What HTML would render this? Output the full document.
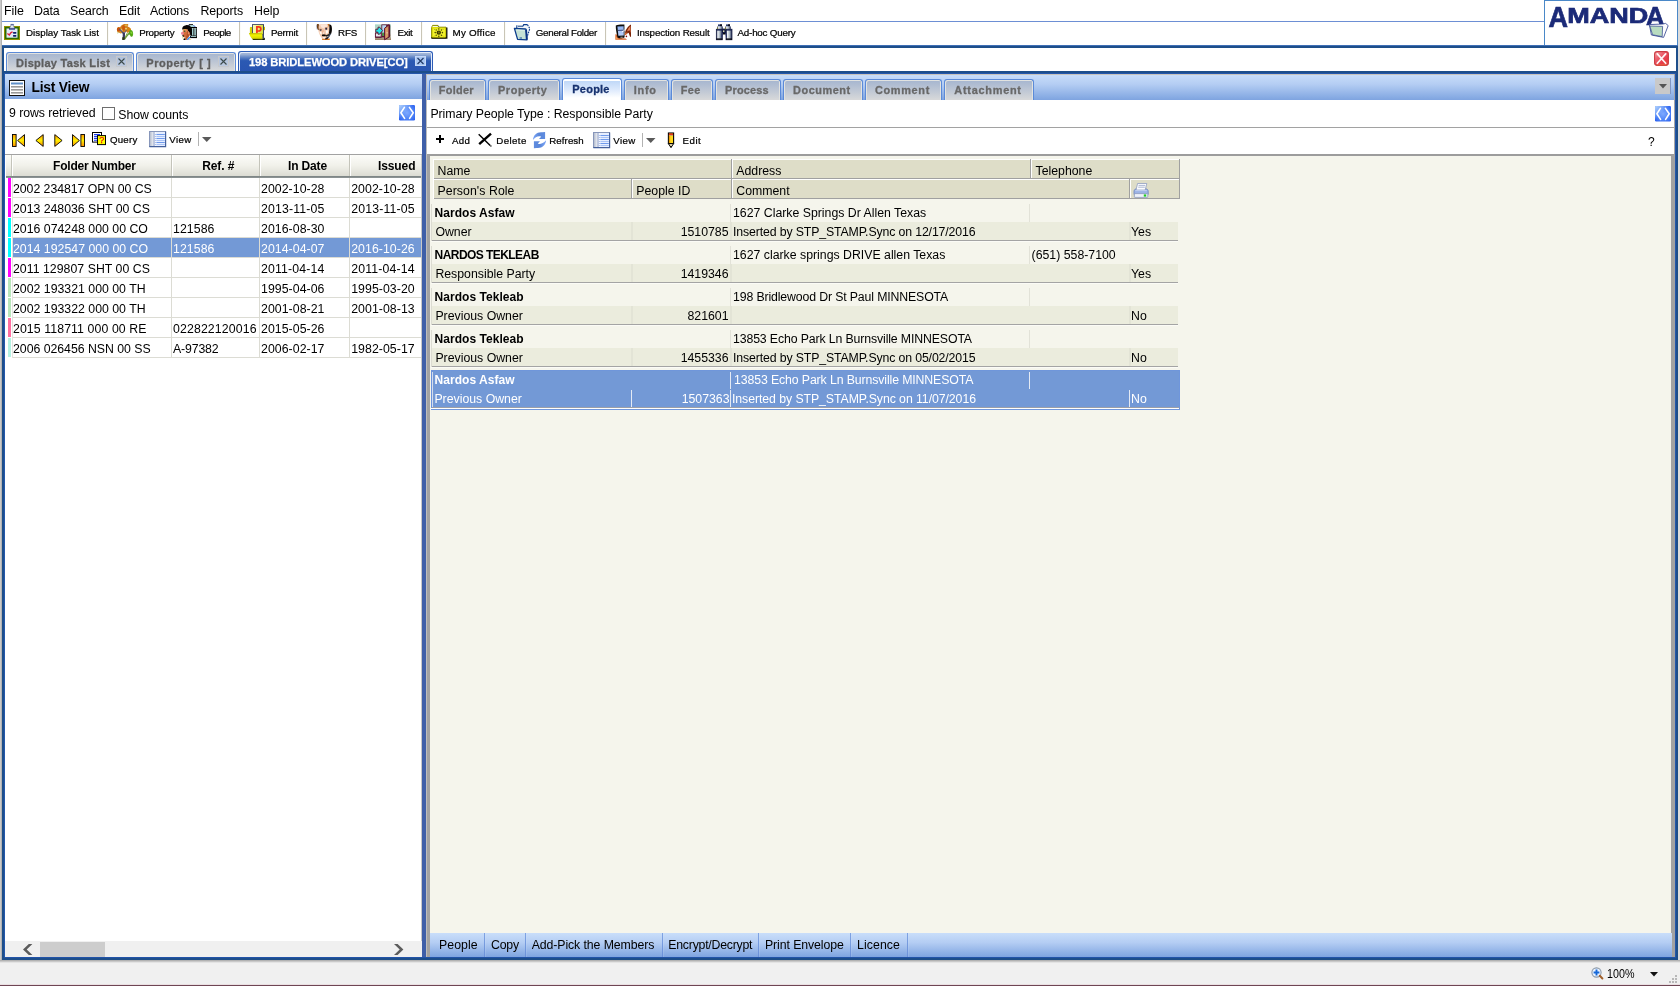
<!DOCTYPE html>
<html lang="en"><head><meta charset="utf-8"><title>AMANDA - 198 BRIDLEWOOD DRIVE[CO]</title>
<style>
html,body{margin:0;padding:0;}
body{width:1680px;height:986px;overflow:hidden;background:#fff;position:relative;font-family:"Liberation Sans",sans-serif;font-size:12px;color:#000;}
div,span.t,svg.i{position:absolute;box-sizing:border-box;}
span.t{white-space:pre;display:block;}
svg.i{display:block;overflow:visible;}

.g{background:linear-gradient(#c9defa 0%,#b4cdf3 40%,#7ea4e0 100%);}
.tab{border:1px solid #5b8ad8;border-bottom:none;border-radius:3px 3px 0 0;background:linear-gradient(#a5b5cf 0%,#bdc6d4 50%,#d8d9da 100%);box-shadow:inset 1px 1px 0 #e2e3e0, inset -1px 0 0 #e2e3e0;}
.tabA{border:1px solid #2d5cb6;border-bottom:none;border-radius:3px 3px 0 0;background:linear-gradient(#a9bcdc 0%,#9db2d6 12%,#5a80c4 30%,#2b59b3 46%,#2955b1 100%);box-shadow:inset 1px 1px 0 #e4ecfa, inset -1px 0 0 #e4ecfa;}
.tabP{border:1px solid #5b8ad8;border-bottom:none;border-radius:3px 3px 0 0;background:linear-gradient(#ffffff 0%,#ffffff 9%,#c0d8f8 10%,#dce9fc 50%,#ffffff 90%);box-shadow:inset 1px 1px 0 #fff, inset -1px 0 0 #fff;}
.cx{border:1px solid #c6c8cc;background:rgba(176,198,232,0.5);}
.hc{background:#deddc8;}

</style></head><body>
<div id="app" style="left:0;top:0;width:1680px;height:986px;will-change:transform;">
<div style="left:0px;top:0px;width:2px;height:962px;background:linear-gradient(to right,#d6d6d6,#a6a6a6);"></div>
<div style="left:1678px;top:0px;width:2px;height:962px;background:#dcdcdc;"></div>
<span class="t" style="left:4px;top:0.70px;font-size:12.4px;line-height:20px;color:#000;letter-spacing:0.005px;">File</span>
<span class="t" style="left:34px;top:0.70px;font-size:12.4px;line-height:20px;color:#000;letter-spacing:-0.173px;">Data</span>
<span class="t" style="left:70px;top:0.70px;font-size:12.4px;line-height:20px;color:#000;letter-spacing:-0.132px;">Search</span>
<span class="t" style="left:119px;top:0.70px;font-size:12.4px;line-height:20px;color:#000;letter-spacing:-0.092px;">Edit</span>
<span class="t" style="left:150px;top:0.70px;font-size:12.4px;line-height:20px;color:#000;letter-spacing:-0.238px;">Actions</span>
<span class="t" style="left:200.5px;top:0.70px;font-size:12.4px;line-height:20px;color:#000;letter-spacing:-0.131px;">Reports</span>
<span class="t" style="left:254px;top:0.70px;font-size:12.4px;line-height:20px;color:#000;letter-spacing:-0.001px;">Help</span>
<div style="left:2px;top:21px;width:1542px;height:1px;background:#6d8fd4;"></div>
<div style="left:1544px;top:0px;width:134px;height:46px;border:1px solid #4a88c8;background:#fff;"></div>
<svg class="i" style="left:1546px;top:2px" width="130" height="42" viewBox="0 0 130 42"><g fill="#1b2a78" stroke="#1b2a78" stroke-width="0.7" font-family="Liberation Sans" font-weight="bold"><text x="2.6" y="24.7" font-size="29.2" textLength="19.5" lengthAdjust="spacingAndGlyphs">A</text><text x="21.2" y="20.7" font-size="22.6" textLength="81" lengthAdjust="spacingAndGlyphs">MAND</text><text x="100" y="23" font-size="26.4" textLength="18.4" lengthAdjust="spacingAndGlyphs">A</text></g><path d="M103.4 22.6 L117 22 L119.6 21.4 L122.2 23.6 L117.6 35.4 L105.4 33z" fill="#fdfdfd" stroke="#2b3f8c" stroke-width="0.8"/><path d="M103.8 24 L116.6 24.4 L116.2 34.6 L106.6 32.8z" fill="#b9dcc0" stroke="#2b3f8c" stroke-width="0.7"/></svg>
<div style="left:107px;top:22px;width:1px;height:23px;background:#c9c5b6;"></div>
<div style="left:108px;top:22px;width:1px;height:23px;background:#fbfbf8;"></div>
<div style="left:239px;top:22px;width:1px;height:23px;background:#c9c5b6;"></div>
<div style="left:240px;top:22px;width:1px;height:23px;background:#fbfbf8;"></div>
<div style="left:306px;top:22px;width:1px;height:23px;background:#c9c5b6;"></div>
<div style="left:307px;top:22px;width:1px;height:23px;background:#fbfbf8;"></div>
<div style="left:365px;top:22px;width:1px;height:23px;background:#c9c5b6;"></div>
<div style="left:366px;top:22px;width:1px;height:23px;background:#fbfbf8;"></div>
<div style="left:421px;top:22px;width:1px;height:23px;background:#c9c5b6;"></div>
<div style="left:422px;top:22px;width:1px;height:23px;background:#fbfbf8;"></div>
<div style="left:504px;top:22px;width:1px;height:23px;background:#c9c5b6;"></div>
<div style="left:505px;top:22px;width:1px;height:23px;background:#fbfbf8;"></div>
<div style="left:605px;top:22px;width:1px;height:23px;background:#c9c5b6;"></div>
<div style="left:606px;top:22px;width:1px;height:23px;background:#fbfbf8;"></div>
<span class="t" style="left:26px;top:22.60px;font-size:9.8px;line-height:20px;color:#000;letter-spacing:0.012px;-webkit-text-stroke:0.22px #000;">Display Task List</span>
<span class="t" style="left:139.2px;top:22.60px;font-size:9.8px;line-height:20px;color:#000;letter-spacing:-0.230px;-webkit-text-stroke:0.22px #000;">Property</span>
<span class="t" style="left:203.3px;top:22.60px;font-size:9.8px;line-height:20px;color:#000;letter-spacing:-0.503px;-webkit-text-stroke:0.22px #000;">People</span>
<span class="t" style="left:271px;top:22.60px;font-size:9.8px;line-height:20px;color:#000;letter-spacing:-0.219px;-webkit-text-stroke:0.22px #000;">Permit</span>
<span class="t" style="left:338px;top:22.60px;font-size:9.8px;line-height:20px;color:#000;letter-spacing:-0.200px;-webkit-text-stroke:0.22px #000;">RFS</span>
<span class="t" style="left:397.5px;top:22.60px;font-size:9.8px;line-height:20px;color:#000;letter-spacing:-0.334px;-webkit-text-stroke:0.22px #000;">Exit</span>
<span class="t" style="left:452.5px;top:22.60px;font-size:9.8px;line-height:20px;color:#000;letter-spacing:0.233px;-webkit-text-stroke:0.22px #000;">My Office</span>
<span class="t" style="left:535.8px;top:22.60px;font-size:9.8px;line-height:20px;color:#000;letter-spacing:-0.298px;-webkit-text-stroke:0.22px #000;">General Folder</span>
<span class="t" style="left:637px;top:22.60px;font-size:9.8px;line-height:20px;color:#000;letter-spacing:-0.157px;-webkit-text-stroke:0.22px #000;">Inspection Result</span>
<span class="t" style="left:737.5px;top:22.60px;font-size:9.8px;line-height:20px;color:#000;letter-spacing:-0.205px;-webkit-text-stroke:0.22px #000;">Ad-hoc Query</span>
<svg class="i" style="left:4px;top:24px;" width="16" height="16" viewBox="0 0 16 16"><rect x="0" y="2" width="16" height="14" fill="#8e8e00"/><rect x="1" y="3" width="14" height="12" fill="#2c6a00"/><rect x="2.5" y="4.5" width="11" height="9.2" fill="#dfeaf9"/><rect x="5" y="4" width="6" height="1.6" fill="#14247a"/><path d="M6.6 0.3h3l0 2 1 1.9h-5l1-1.9z" fill="#e8ecf2" stroke="#60709a" stroke-width="0.5"/><rect x="7" y="0.3" width="2.6" height="1" fill="#3a4a8a"/><path d="M3.4 9.4 L5.3 11 L7 8.6 L8.6 7.8" fill="none" stroke="#e3203c" stroke-width="1.3"/><rect x="9" y="8" width="3.4" height="1.7" rx="0.6" fill="#10206e"/><rect x="9" y="11" width="3.4" height="1.7" rx="0.6" fill="#10206e"/></svg>
<svg class="i" style="left:117px;top:24px;" width="16" height="16" viewBox="0 0 16 16"><path d="M12.8 8.6 C11 10.6 9.2 12.6 7.4 15.2" stroke="#6c9c3a" stroke-width="1.5" fill="none"/><path d="M10.6 8.4 C9.6 10.4 8.6 12.4 7.2 14.4" stroke="#88b050" stroke-width="1" fill="none"/><path d="M0 5 C0 3 2 2.8 3 3.4 C4 1.4 6 0.4 7 0 L11 0 C11.6 1 11.2 2 10.5 2.6 C12.4 3 14 4.2 14 6 C14 7.6 13 8.6 12 8.2 C11 9 9.5 8.2 9 7.2 C8 8.2 7 8.6 6 8 C5 9.6 3 9.6 2.6 8.4 C1 9 0 8 0 6.5z" fill="#d27c1a"/><ellipse cx="1.6" cy="5.4" rx="1.7" ry="1.9" fill="#c6500e"/><ellipse cx="6.6" cy="3.8" rx="1.5" ry="2.7" fill="#cc5a0c"/><ellipse cx="12" cy="5.4" rx="1.9" ry="1.5" fill="#d4860e"/><ellipse cx="4.4" cy="6" rx="1" ry="1.5" fill="#e2c66a" transform="rotate(-30 4.4 6)"/><ellipse cx="9.2" cy="1.3" rx="1.7" ry="0.9" fill="#dcb44e"/><ellipse cx="9" cy="4.6" rx="1.1" ry="0.9" fill="#e4cc78"/><ellipse cx="3.4" cy="8.4" rx="1.2" ry="0.8" fill="#d89a2a"/><path d="M2.4 5 C4 6.4 5.4 8 6.6 10" stroke="#5a5478" stroke-width="1.05" fill="none"/><path d="M9.6 6 C8.6 7.4 7.8 8.6 7.2 10" stroke="#6a5a6a" stroke-width="1" fill="none"/><path d="M5.4 8 C6 10.6 5.8 13.4 5.2 15.8 L7.4 16 C8 13.4 8.2 10.8 7.8 8.4z" fill="#3a3a60"/><path d="M5.5 13 L5.2 15.8 L7.4 16 L7.8 13.4z" fill="#2e3c14"/><path d="M12.4 7 C13.4 5.4 15.4 6 15.8 8 C16.4 9.6 16.2 11.4 15.4 12.6 C14.4 13 13.4 12.4 13.2 11.4 C12 11.2 11.6 8.6 12.4 7z" fill="#52a814"/><path d="M13.8 7.4 C15 7.4 15.6 9 15.4 10.6 C14.6 9.8 13.8 9.2 13.2 9z" fill="#86d234"/><path d="M0.4 8.6 l1 0.2 l-0.6 1z" fill="#7ab82a"/></svg>
<svg class="i" style="left:181px;top:24px;" width="16" height="16" viewBox="0 0 16 16"><rect x="7.8" y="0.2" width="4.2" height="1.1" fill="#000"/><path d="M6.6 3.2 L8.2 1.2 L12.6 1.2 L14.8 3.2z" fill="#aad8d8"/><path d="M8.2 1.2 l-1.4 1.4 M12.6 1.2 l1.6 1.6" stroke="#2038c8" stroke-width="0.9"/><rect x="7" y="3" width="9" height="1.3" fill="#000"/><rect x="10.4" y="4.3" width="5" height="7.4" fill="#b4dcdc"/><path d="M10.5 4.3v7.4M12.9 4.3v7.4M15.3 4.3v7.4" stroke="#000" stroke-width="1"/><path d="M11.7 4.6v7M14.1 4.6v7" stroke="#8cbcbc" stroke-width="0.5"/><rect x="9" y="11.5" width="7" height="2.6" fill="#000"/><rect x="10" y="12.1" width="5.2" height="0.9" fill="#a8d0d0"/><path d="M1.2 5.6 C0.8 3.2 2.6 1.4 5 1.2 C7.6 0.8 10 2 10.6 4.4 C11.2 6.8 10.8 9.6 9.6 11.6 L8 9 L6.4 5.4 L3 5.6z" fill="#0a0605"/><path d="M1.8 5.4 L6.2 5 C7 6.8 7.4 8.2 9 8.8 C9.2 10.8 8.2 12.8 6.6 14 L5.6 16 L4 16 L4.4 13.8 C3.2 13.6 2 12.6 1.8 11.2 L1.4 9.6 L1.8 8z" fill="#d26c3a"/><path d="M6 6.2 C6.6 8 7.4 9 8.8 9.2 C8.8 11 8 12.6 6.6 13.8 L5.6 15.8 L5 13 C6 11 6.2 8.6 6 6.2z" fill="#b4522a"/><path d="M2 6 l1.8 -0.6 l2 0.4 l-0.4 2.2 l-2.6 0.2z" fill="#ee9860"/><ellipse cx="3.7" cy="7.2" rx="0.8" ry="0.9" fill="#4a5a3a"/><path d="M2.4 5.8 l2.6-0.3" stroke="#e0c040" stroke-width="0.6"/><ellipse cx="1.4" cy="9.3" rx="1.4" ry="1.5" fill="#ee8498"/><path d="M1.4 10.8 l1.8 0.6 l-0.4 1.6 l-1.4-0.8z" fill="#3a2a1a"/><path d="M7.2 7.6 c1-0.4 1.5 1 1.1 2.4 c-0.6 0.6-1.3 0.2-1.5-0.6z" fill="#e8946a"/><path d="M2.8 14.6 L4.4 14.2 L4.2 16 L2.4 16z" fill="#000"/><path d="M5.6 16 L7.2 13.4 L9.8 12.6 L8.4 14.8 L7.4 16z" fill="#3c8cf0"/><path d="M7.4 16 l1.4-1.6 l1.6 1.6z" fill="#f4d48c"/><path d="M1.6 12.6 l0.9 1.7 l-1 0.3z" fill="#d8d030"/></svg>
<svg class="i" style="left:249px;top:24px;" width="16" height="16" viewBox="0 0 16 16"><defs><linearGradient id="pp" x1="0" y1="0" x2="1" y2="0"><stop offset="0" stop-color="#fafab8"/><stop offset="0.5" stop-color="#f0f07a"/><stop offset="1" stop-color="#d4dc3c"/></linearGradient><linearGradient id="pf" x1="0" y1="0" x2="0" y2="1"><stop offset="0" stop-color="#b8b800"/><stop offset="0.3" stop-color="#f2f200"/><stop offset="0.65" stop-color="#e0e000"/><stop offset="1" stop-color="#8c8c00"/></linearGradient></defs><rect x="15" y="2.8" width="1" height="3.4" fill="#c0c000"/><rect x="0.9" y="2.9" width="2.4" height="7" rx="0.8" fill="#c6c600"/><rect x="1.5" y="3.6" width="1" height="5.4" fill="#e2e200"/><path d="M3.1 0.1 H15 V15.9 H13.4 L13.4 10 H3.1z" fill="#3a4260"/><rect x="3.1" y="0.1" width="11.9" height="1" fill="#5a6070"/><rect x="4" y="1" width="10" height="9" fill="url(#pp)"/><path d="M7.9 9.4 L7.9 2.8 L9.6 2.8 C12.6 2.8 12.6 7 9.6 7 L8 7" fill="none" stroke="#f8301c" stroke-width="1.7"/><path d="M0 9.4 C0 9 0.4 8.9 0.8 9 L13.6 9.2 L14 14.6 L12.6 15.9 L4.2 15.9 C2.4 14 0.8 12 0 9.4z" fill="url(#pf)"/><path d="M3.4 15.2 L4.2 16 L15.8 16 L15.8 13.4 L14 15 L12.6 15.4z" fill="#0c1400"/><path d="M13.4 10 L14.6 10 L14.8 14.4 L13.6 15.2z" fill="#44506c"/></svg>
<svg class="i" style="left:316px;top:24px;" width="16" height="16" viewBox="0 0 16 16"><path d="M2.2 0.6 C5 -0.3 11 -0.3 13.4 0.6 C14 4 13.8 8 12.6 11 C11.4 13.6 9.8 15.2 8 15.2 C6.4 15.2 5 13.4 3.8 11 C2.4 8 1.4 4 2.2 0.6z" fill="#f4cbb0"/><path d="M4.4 0.8 C6.4 0.2 10 0.2 11.6 0.8 C11.4 3 9.6 4.4 8 4.4 C6.4 4.4 4.4 3 4.4 0.8z" fill="#fce6da"/><path d="M3.4 7.8 l2 0.2 l0.4 2.2 l-1.4-0.2z M9.8 6.6 l2.4-0.4 l-0.4 3 l-1.8 0.6z M6.8 13 l2.2 0 l-0.8 1.6z" fill="#fffdf8"/><path d="M0.9 0.3 C1.8 -0.2 3 0 3 0.8 C2.4 2.4 2.6 4.4 3 6 L1.6 5.6 C0.8 4 0.5 1.8 0.9 0.3z" fill="#6c3c12"/><path d="M0.8 0.8 C0.3 2.4 0.5 4.4 1.2 5.6" stroke="#9aa8d0" stroke-width="0.6" fill="none"/><path d="M11.4 0.2 C12.4 -0.2 13.4 0 13.6 0.8 L13 3.2 C12.6 2 12 1 11.4 0.2z" fill="#c26a1c"/><path d="M13.2 0.6 C14.4 0.2 15.4 1 15.7 2.6 C16.2 5 16 8 15.2 9.6 L12.8 9.8 C13.4 7 13.6 3.4 13.2 0.6z" fill="#0a0706"/><path d="M14.8 9 C13.6 10.6 11.6 11.6 9.8 12" stroke="#20201e" stroke-width="1.3" fill="none"/><path d="M14.4 9.8 C13.8 11.6 12.4 13.2 11 14.2" stroke="#3a4a66" stroke-width="1.1" fill="none"/><ellipse cx="4.6" cy="6.1" rx="1.1" ry="0.75" fill="#15183a"/><ellipse cx="10.2" cy="4.8" rx="1.1" ry="0.85" fill="#15183a"/><path d="M3.2 5.2 l2.6 0.2 M8.8 3.8 l2.6-0.4" stroke="#9a5a3a" stroke-width="0.6"/><path d="M7 5.6 L6.8 9.4" stroke="#e6a684" stroke-width="0.9" fill="none"/><rect x="6.9" y="8.6" width="1.1" height="1.3" fill="#fff"/><path d="M6.4 10.2 h2.4" stroke="#b87858" stroke-width="0.6"/><rect x="5.9" y="10.6" width="4" height="1.6" rx="0.7" fill="#0a0a0a"/><path d="M6 14.4 L8 15.3 L10 14.4 L13.6 14.6 L13.8 16 L6.2 16z" fill="#d4721c"/><path d="M9 14.8 L10.8 13.2 L12.6 13.4 L11.4 15 L9.4 15.6z" fill="#16161e"/></svg>
<svg class="i" style="left:375px;top:24px;" width="16" height="16" viewBox="0 0 16 16"><defs><linearGradient id="exg" x1="0" y1="0" x2="0" y2="1"><stop offset="0" stop-color="#a9d2c2"/><stop offset="0.55" stop-color="#c9ddd0"/><stop offset="0.8" stop-color="#b8b4a0"/><stop offset="1" stop-color="#9a7a5c"/></linearGradient></defs><rect x="0" y="0.4" width="16" height="15.6" fill="url(#exg)"/><rect x="6.4" y="0.4" width="8.4" height="13" fill="#5c1030"/><rect x="7.2" y="1.2" width="4" height="8" fill="#b8d8f4"/><rect x="7.2" y="8.6" width="2.4" height="3.4" fill="#4a9a4a"/><path d="M9.6 4.2 L14 0.8 L14 13 L9.6 15.8z" fill="#c98656" stroke="#5c1030" stroke-width="1"/><path d="M10.6 5 L12.8 3.2 L12.8 12.6 L10.6 14z" fill="#d89a6a"/><rect x="11.6" y="8.4" width="0.9" height="0.9" fill="#fff"/><path d="M14 1 L15.2 1.4 L15.2 12 L14 13z" fill="#5c1030"/><rect x="0.4" y="9" width="5.8" height="4.2" fill="#e6e6ea" stroke="#5c1030" stroke-width="0.9"/><path d="M0.4 13.2 h6" stroke="#5c1030" stroke-width="1"/><path d="M0.8 5.2 L3 5.2 L3 3.2 L4.6 3.2 L7.6 6.6 L4.6 10.2 L3 10.2 L3 8.2 L0.8 8.2z" fill="#1ee6ea" stroke="#5c1030" stroke-width="0.9"/></svg>
<svg class="i" style="left:431px;top:24px;" width="16" height="16" viewBox="0 0 16 16"><path d="M0.6 3.6 L1.6 1.4 L7 1.4 L8 3.2 L15 3.2 L15 14 L0.6 14z" fill="#e9e90c" stroke="#8a8a00" stroke-width="1"/><path d="M1.8 2 L6.8 2 L7.4 3 L1.4 3z" fill="#f8f8e0"/><path d="M7 2 l1 1.4" stroke="#4a5a9a" stroke-width="0.8"/><path d="M0.4 14 H15.8 V3.4" fill="none" stroke="#111100" stroke-width="1.3"/><rect x="1.4" y="4" width="13" height="9.2" fill="#f2f22a"/><path d="M1.4 4 h13 v9.2 h-13z" fill="none" stroke="#caca00" stroke-width="0.6"/><circle cx="7.8" cy="8.6" r="2.2" fill="#3c3a00"/><circle cx="7.8" cy="8.6" r="1" fill="#7a7600"/><g fill="#4a4800"><circle cx="7.8" cy="5" r="0.8"/><circle cx="7.8" cy="12.2" r="0.8"/><circle cx="4.2" cy="8.6" r="0.8"/><circle cx="11.4" cy="8.6" r="0.8"/><circle cx="5.2" cy="6" r="0.7"/><circle cx="10.4" cy="6" r="0.7"/><circle cx="5.2" cy="11.2" r="0.7"/><circle cx="10.4" cy="11.2" r="0.7"/></g><path d="M3 5 l1 1 M12.6 5 l-1 1 M3 12.4 l1-1 M12.6 12.4 l-1-1" stroke="#b0ae00" stroke-width="0.8"/></svg>
<svg class="i" style="left:514px;top:24px;" width="16" height="16" viewBox="0 0 16 16"><path d="M2.6 4.6 L2.9 1.6 L9 1.8 L9.7 0.5 L13.6 0.5 L15.9 4.6 L13 13.4 L12 6z" fill="#f2f7fb"/><path d="M2.7 4.6 L2.9 1.2" stroke="#0c3c8c" stroke-width="1.1"/><path d="M4 2.3 H9" stroke="#5878a8" stroke-width="1.5"/><path d="M9 2.2 L9.7 0.6 L13.4 0.6" stroke="#0c3c8c" stroke-width="1.1" fill="none"/><path d="M13.4 0.6 L15.8 4.6 L13.2 12.8" stroke="#0c3c8c" stroke-width="1.1" fill="none" stroke-dasharray="1.7 0.9"/><path d="M0.4 4.4 L11.4 5 C12.2 5.2 12.4 5.6 12.4 6.4 L13 15.8 L3.6 15.4z" fill="#c6e2d6" stroke="#0c3c8c" stroke-width="1.3" stroke-linejoin="round"/><path d="M12 6 L12.8 15.6" stroke="#0c3484" stroke-width="1.8"/><path d="M5.6 14 h2.4" stroke="#3a6aa8" stroke-width="1.2"/><path d="M2.2 6 L10.6 6.4" stroke="#e4f4ec" stroke-width="0.8"/></svg>
<svg class="i" style="left:615px;top:24px;" width="16" height="16" viewBox="0 0 16 16"><path d="M0.4 10.4 C1.6 10 2.4 11 3 12.4 L5 14 L10.6 14.6 L12 15.8 L0.4 15.8z" fill="#d4662c"/><path d="M0.6 12 C1.6 13 2.6 14.6 4.6 15.6 L0.6 15.6z" fill="#f09a5c"/><path d="M0.8 1.6 C3.4 0.4 7 0.4 9.4 0.6 L9.6 13.2 C7.6 14.6 3.6 14.4 2.4 13.2 C1.6 9 0.6 5 0.8 1.6z" fill="#0e0e0e"/><defs><linearGradient id="scr" x1="0" y1="0" x2="0" y2="1"><stop offset="0" stop-color="#88aef0"/><stop offset="0.5" stop-color="#a8c4f6"/><stop offset="1" stop-color="#b8d0fa"/></linearGradient></defs><path d="M2.4 2.4 L8.6 2.2 L8.8 11.6 L3.4 11.8z" fill="url(#scr)"/><path d="M3 6.4 L8 6.2" stroke="#28386a" stroke-width="0.9"/><rect x="5.4" y="12.6" width="2.4" height="1.4" fill="#8a7a72"/><path d="M16 0.6 C14 1.6 11.6 4.4 10.4 7 L9.8 10.4 L11.4 10 L13.6 8.8 L15 12.6 L16 13z" fill="#7a2408"/><path d="M15.4 2 C14 3.4 12.6 5.4 12 7.4 L14.6 6.2 L15.6 9z" fill="#e8845a"/><path d="M10 9 L12.6 8.2 L11 11 L9.8 11z" fill="#d86a34"/><path d="M8 7.6 L10.6 5" stroke="#e8eef8" stroke-width="0.9"/><circle cx="7.6" cy="7.6" r="0.7" fill="#fff"/><circle cx="11.4" cy="12.4" r="0.8" fill="#8a0c0c"/></svg>
<svg class="i" style="left:716px;top:24px;" width="16" height="16" viewBox="0 0 16 16"><defs><linearGradient id="bn" x1="0" y1="0" x2="1" y2="0"><stop offset="0" stop-color="#1a2450"/><stop offset="0.25" stop-color="#eef2f4"/><stop offset="0.6" stop-color="#aab6c0"/><stop offset="1" stop-color="#1a2450"/></linearGradient></defs><rect x="5.4" y="4.6" width="5.4" height="4.6" fill="#141c44"/><rect x="7" y="6.4" width="1.4" height="1.6" fill="#d8d8b0"/><path d="M6 9 h4 l-0.6 1.6 h-2.8z" fill="#0a0a0a"/><rect x="2" y="0.4" width="4" height="2.2" fill="#2a3c6a"/><rect x="10" y="0.4" width="4" height="2.2" fill="#2a3c6a"/><rect x="4" y="0.4" width="2" height="2" fill="#0a0c1c"/><rect x="12" y="0.4" width="2" height="2" fill="#0a0c1c"/><rect x="1.2" y="2.4" width="5.6" height="3" fill="url(#bn)"/><rect x="9.2" y="2.4" width="5.6" height="3" fill="url(#bn)"/><rect x="1.2" y="3.4" width="0.8" height="2" fill="#8a8a20"/><rect x="9.2" y="3.4" width="0.8" height="2" fill="#8a8a20"/><rect x="0.3" y="5.2" width="6" height="10.6" fill="url(#bn)" stroke="#101638" stroke-width="0.7"/><rect x="10" y="5.2" width="6" height="10.6" fill="url(#bn)" stroke="#101638" stroke-width="0.7"/><rect x="0.3" y="5.2" width="6" height="1.4" fill="#1a2450"/><rect x="10" y="5.2" width="6" height="1.4" fill="#1a2450"/><rect x="0.3" y="14.4" width="6" height="1.4" fill="#0a0a14"/><rect x="10" y="14.4" width="6" height="1.4" fill="#0a0a14"/><path d="M6.4 9 L5.6 13.4 M9.8 9 L10.6 13.4" stroke="#28346a" stroke-width="1"/></svg>
<div style="left:2px;top:45px;width:1676px;height:915px;border:3px solid #1d4e8a;border-left-width:2px;border-right-width:2px;background:#fff;"></div>
<div style="left:2px;top:45px;width:1676px;height:1px;background:#3f6fb6;"></div>
<div style="left:4px;top:74px;width:1px;height:883px;background:#2457ab;"></div>
<div style="left:1675px;top:74px;width:1px;height:883px;background:#2457ab;"></div>
<div style="left:4px;top:71px;width:1672px;height:3px;background:#1d4e8a;"></div>
<div style="left:4px;top:73px;width:1672px;height:1px;background:#2457ab;"></div>
<div class="tab" style="left:6px;top:52px;width:128px;height:19px;"></div>
<span class="t" style="left:16.1px;top:52.94px;font-size:11px;line-height:20px;color:#5e5e5e;letter-spacing:0.291px;font-weight:bold;-webkit-text-stroke:0.3px #5e5e5e;">Display Task List</span>
<div class="cx" style="left:116px;top:56px;width:11px;height:11px;"></div>
<svg class="i" style="left:116px;top:56px;" width="11" height="11" viewBox="0 0 11 11"><path d="M2.5 2.5l6 6M8.5 2.5l-6 6" stroke="#3c4a4a" stroke-width="1.1" fill="none"/></svg>
<div class="tab" style="left:136px;top:52px;width:100px;height:19px;"></div>
<span class="t" style="left:146.3px;top:52.94px;font-size:11px;line-height:20px;color:#5e5e5e;letter-spacing:0.527px;font-weight:bold;-webkit-text-stroke:0.3px #5e5e5e;">Property [ ]</span>
<div class="cx" style="left:218px;top:56px;width:11px;height:11px;"></div>
<svg class="i" style="left:218px;top:56px;" width="11" height="11" viewBox="0 0 11 11"><path d="M2.5 2.5l6 6M8.5 2.5l-6 6" stroke="#3c4a4a" stroke-width="1.1" fill="none"/></svg>
<div class="tabA" style="left:238px;top:51px;width:195px;height:20px;"></div>
<span class="t" style="left:248.9px;top:52.02px;font-size:11.2px;line-height:20px;color:#fff;letter-spacing:-0.091px;font-weight:bold;-webkit-text-stroke:0.25px #fff;">198 BRIDLEWOOD DRIVE[CO]</span>
<div style="left:415px;top:56px;width:11px;height:10px;background:#a9c6f3;border:1px solid #c5d8f6;"></div>
<svg class="i" style="left:415px;top:56px;" width="11" height="10" viewBox="0 0 11 10"><path d="M2.5 2l6 6M8.5 2l-6 6" stroke="#223a66" stroke-width="1.2" fill="none"/></svg>
<svg class="i" style="left:1654px;top:51px;" width="15" height="15" viewBox="0 0 15 15"><defs><linearGradient id="rg" x1="0" y1="0" x2="0.9" y2="1"><stop offset="0" stop-color="#f6b4b4"/><stop offset="0.35" stop-color="#ec6470"/><stop offset="0.7" stop-color="#e63c4a"/><stop offset="1" stop-color="#ea4a3e"/></linearGradient></defs><rect x="0.6" y="0.6" width="13.8" height="13.8" rx="2.6" fill="url(#rg)" stroke="#cc3a42" stroke-width="1.1"/><path d="M2.6 13.9 h9.8" stroke="#f0783c" stroke-width="0.8" opacity="0.8"/><path d="M3.3 2.9 L11.7 12.3 M11.7 2.9 L3.3 12.3" stroke="#fff" stroke-width="1.7" stroke-linecap="round" opacity="0.95"/></svg>
<div class="g" style="left:5px;top:74px;width:417px;height:25px;"></div>
<svg class="i" style="left:9px;top:80px;" width="16" height="16" viewBox="0 0 16 16"><rect x="0.5" y="0.5" width="15" height="15" fill="#fff" stroke="#111"/><rect x="2" y="2.5" width="12" height="2" fill="#5f8fc8"/><rect x="2" y="6" width="12" height="1.6" fill="#9a9a9a"/><rect x="2" y="9" width="12" height="1.6" fill="#9a9a9a"/><rect x="2" y="12" width="12" height="1.6" fill="#9a9a9a"/></svg>
<span class="t" style="left:31.5px;top:77.52px;font-size:13.8px;line-height:20px;color:#000;letter-spacing:-0.207px;font-weight:bold;">List View</span>
<span class="t" style="left:9px;top:102.74px;font-size:12.3px;line-height:20px;color:#000;letter-spacing:-0.063px;">9 rows retrieved</span>
<div style="left:102px;top:107px;width:13px;height:13px;border:1px solid #6e6e6e;background:#fff;"></div>
<span class="t" style="left:118.3px;top:104.94px;font-size:12.3px;line-height:20px;color:#000;letter-spacing:-0.039px;">Show counts</span>
<svg class="i" style="left:399px;top:105.4px;" width="16" height="15.5" viewBox="0 0 16 15.5"><defs><radialGradient id="bi" cx="0.5" cy="0.5" r="0.75"><stop offset="0" stop-color="#7eaaff"/><stop offset="0.55" stop-color="#4d82f6"/><stop offset="1" stop-color="#1f55ee"/></radialGradient><linearGradient id="bi2" x1="0" y1="0" x2="0.45" y2="0.45"><stop offset="0" stop-color="#c8e6ff" stop-opacity="0.9"/><stop offset="1" stop-color="#c8e6ff" stop-opacity="0"/></linearGradient></defs><rect x="0" y="0" width="16" height="15.5" rx="1.3" fill="url(#bi)"/><rect x="0" y="0" width="16" height="15.5" rx="1.3" fill="url(#bi2)"/><path d="M5.4 2.4 L1.9 7.8 L5.6 13.4 M10.4 2.4 L14.2 7.8 L10.6 13.4" fill="none" stroke="#fff" stroke-width="1.6" stroke-linecap="round" stroke-linejoin="round"/></svg>
<div style="left:5px;top:126px;width:417px;height:1px;background:#a2a2a2;"></div>
<svg class="i" style="left:12px;top:134px;" width="14" height="13" viewBox="0 0 14 13"><defs><linearGradient id="yg" x1="0" y1="0" x2="0" y2="1"><stop offset="0" stop-color="#ff9a00"/><stop offset="0.5" stop-color="#ffee00"/><stop offset="1" stop-color="#ff8a00"/></linearGradient></defs><rect x="0.5" y="0.5" width="3.6" height="12" fill="url(#yg)" stroke="#000" stroke-width="0.9"/><path d="M12.5 0.6 L5.6 6.5 L12.5 12.4z" fill="url(#yg)" stroke="#000" stroke-width="0.9"/></svg>
<svg class="i" style="left:35px;top:134px;" width="9" height="13" viewBox="0 0 9 13"><path d="M8.2 0.6 L0.9 6.5 L8.2 12.4z" fill="url(#yg)" stroke="#000" stroke-width="0.9"/></svg>
<svg class="i" style="left:54px;top:134px;" width="9" height="13" viewBox="0 0 9 13"><path d="M0.8 0.6 L8.1 6.5 L0.8 12.4z" fill="url(#yg)" stroke="#000" stroke-width="0.9"/></svg>
<svg class="i" style="left:71px;top:134px;" width="14" height="13" viewBox="0 0 14 13"><path d="M1.5 0.6 L8.4 6.5 L1.5 12.4z" fill="url(#yg)" stroke="#000" stroke-width="0.9"/><rect x="9.9" y="0.5" width="3.6" height="12" fill="url(#yg)" stroke="#000" stroke-width="0.9"/></svg>
<svg class="i" style="left:92px;top:132px;" width="14" height="13" viewBox="0 0 14 13"><rect x="0.5" y="0.5" width="9" height="9.6" fill="#fff" stroke="#000"/><path d="M2 2.6h6M2 4.5h6M2 6.4h6M2 8.3h6" stroke="#1c3cec" stroke-width="1.1"/><rect x="5.5" y="3.6" width="8" height="9" fill="#ffff00" stroke="#000"/><text x="7.2" y="11.4" font-size="9" fill="#e81010" font-family="Liberation Sans" stroke="#e81010" stroke-width="0.25">?</text></svg>
<span class="t" style="left:110px;top:130.04px;font-size:9.7px;line-height:20px;color:#000;letter-spacing:0.217px;-webkit-text-stroke:0.22px #000;">Query</span>
<svg class="i" style="left:149px;top:131px;" width="17" height="16" viewBox="0 0 17 16"><defs><linearGradient id="vl" x1="0" y1="0" x2="1" y2="0"><stop offset="0" stop-color="#b4bccd"/><stop offset="1" stop-color="#f6f8fc"/></linearGradient></defs><rect x="0.5" y="0.5" width="16" height="15" fill="#e6eeff" stroke="#8796ba"/><rect x="1" y="1" width="3.8" height="14" fill="url(#vl)"/><rect x="5.4" y="1" width="1.8" height="14" fill="#f5f8ff"/><path d="M5 1v14" stroke="#8494bc" stroke-width="0.9"/><path d="M7.4 3.5h8.4M7.4 7.5h8.4M7.4 11.5h8.4" stroke="#6f9aec" stroke-width="1.1"/><path d="M7.4 5.5h8.4M7.4 9.5h8.4M7.4 13.5h8.4" stroke="#a9c3f6" stroke-width="1.1"/><path d="M5.8 3.5h1M5.8 5.5h1M5.8 7.5h1M5.8 9.5h1M5.8 11.5h1M5.8 13.5h1" stroke="#9fb4e4" stroke-width="1"/><path d="M0.4 15.6 H16.6 V0.6" stroke="#44609c" stroke-width="1.2" fill="none"/></svg>
<span class="t" style="left:169.3px;top:130.04px;font-size:9.7px;line-height:20px;color:#000;letter-spacing:0.412px;-webkit-text-stroke:0.22px #000;">View</span>
<div style="left:198px;top:132px;width:1px;height:14px;background:#b2b2b2;"></div>
<svg class="i" style="left:202px;top:137px;" width="10" height="5" viewBox="0 0 10 5"><path d="M0 0h9.5L4.75 5z" fill="#5a5a5a"/></svg>
<div style="left:5px;top:154px;width:417px;height:1px;background:#a2a2a2;"></div>
<div style="left:6px;top:155px;width:416px;height:21px;background:linear-gradient(#fcfcf9 0%,#f1f1ea 50%,#dcdcd3 100%);"></div>
<div style="left:6px;top:176px;width:416px;height:1px;background:#7f8787;"></div>
<div style="left:6px;top:177px;width:416px;height:1px;background:#8b9292;"></div>
<div style="left:11px;top:155px;width:1px;height:21px;background:#c4c4ba;"></div>
<div style="left:12px;top:155px;width:1px;height:21px;background:#fff;"></div>
<div style="left:171px;top:155px;width:1px;height:21px;background:#c4c4ba;"></div>
<div style="left:172px;top:155px;width:1px;height:21px;background:#fff;"></div>
<div style="left:259px;top:155px;width:1px;height:21px;background:#c4c4ba;"></div>
<div style="left:260px;top:155px;width:1px;height:21px;background:#fff;"></div>
<div style="left:349px;top:155px;width:1px;height:21px;background:#c4c4ba;"></div>
<div style="left:350px;top:155px;width:1px;height:21px;background:#fff;"></div>
<span class="t" style="left:53px;top:155.84px;font-size:12px;line-height:20px;color:#000;letter-spacing:-0.203px;font-weight:bold;">Folder Number</span>
<span class="t" style="left:202.2px;top:155.84px;font-size:12px;line-height:20px;color:#000;letter-spacing:-0.113px;font-weight:bold;">Ref. #</span>
<span class="t" style="left:288px;top:155.84px;font-size:12px;line-height:20px;color:#000;letter-spacing:-0.144px;font-weight:bold;">In Date</span>
<span class="t" style="left:378px;top:155.84px;font-size:12px;line-height:20px;color:#000;letter-spacing:-0.103px;font-weight:bold;">Issued</span>
<div style="left:8px;top:178px;width:3px;height:19px;background:#ff00ff;"></div>
<div style="left:12px;top:197px;width:410px;height:1px;background:#dcdcd4;"></div>
<span class="t" style="left:13px;top:178.74px;font-size:12.3px;line-height:20px;color:#000;letter-spacing:-0.038px;">2002 234817 OPN 00 CS</span>
<span class="t" style="left:261px;top:178.74px;font-size:12.3px;line-height:20px;color:#000;letter-spacing:0.058px;">2002-10-28</span>
<span class="t" style="left:351.2px;top:178.74px;font-size:12.3px;line-height:20px;color:#000;letter-spacing:0.058px;">2002-10-28</span>
<div style="left:8px;top:198px;width:3px;height:19px;background:#ff00ff;"></div>
<div style="left:12px;top:217px;width:410px;height:1px;background:#dcdcd4;"></div>
<span class="t" style="left:13px;top:198.74px;font-size:12.3px;line-height:20px;color:#000;letter-spacing:-0.016px;">2013 248036 SHT 00 CS</span>
<span class="t" style="left:261px;top:198.74px;font-size:12.3px;line-height:20px;color:#000;letter-spacing:0.149px;">2013-11-05</span>
<span class="t" style="left:351.2px;top:198.74px;font-size:12.3px;line-height:20px;color:#000;letter-spacing:0.149px;">2013-11-05</span>
<div style="left:8px;top:218px;width:3px;height:19px;background:#00ffff;"></div>
<div style="left:12px;top:237px;width:410px;height:1px;background:#dcdcd4;"></div>
<span class="t" style="left:13px;top:218.74px;font-size:12.3px;line-height:20px;color:#000;letter-spacing:0.008px;">2016 074248 000 00 CO</span>
<span class="t" style="left:173px;top:218.74px;font-size:12.3px;line-height:20px;color:#000;letter-spacing:0.076px;">121586</span>
<span class="t" style="left:261px;top:218.74px;font-size:12.3px;line-height:20px;color:#000;letter-spacing:0.058px;">2016-08-30</span>
<div style="left:13px;top:238px;width:409px;height:19px;background:#7399d6;"></div>
<div style="left:8px;top:238px;width:3px;height:19px;background:#00ffff;"></div>
<div style="left:12px;top:257px;width:410px;height:1px;background:#dcdcd4;"></div>
<span class="t" style="left:13px;top:238.74px;font-size:12.3px;line-height:20px;color:#fff;letter-spacing:0.018px;">2014 192547 000 00 CO</span>
<span class="t" style="left:173px;top:238.74px;font-size:12.3px;line-height:20px;color:#fff;letter-spacing:0.076px;">121586</span>
<span class="t" style="left:261px;top:238.74px;font-size:12.3px;line-height:20px;color:#fff;letter-spacing:0.058px;">2014-04-07</span>
<span class="t" style="left:351.2px;top:238.74px;font-size:12.3px;line-height:20px;color:#fff;letter-spacing:0.058px;">2016-10-26</span>
<div style="left:8px;top:258px;width:3px;height:19px;background:#ff00ff;"></div>
<div style="left:12px;top:277px;width:410px;height:1px;background:#dcdcd4;"></div>
<span class="t" style="left:13px;top:258.74px;font-size:12.3px;line-height:20px;color:#000;letter-spacing:0.028px;">2011 129807 SHT 00 CS</span>
<span class="t" style="left:261px;top:258.74px;font-size:12.3px;line-height:20px;color:#000;letter-spacing:0.149px;">2011-04-14</span>
<span class="t" style="left:351.2px;top:258.74px;font-size:12.3px;line-height:20px;color:#000;letter-spacing:0.149px;">2011-04-14</span>
<div style="left:8px;top:278px;width:3px;height:19px;background:#b9e6bb;"></div>
<div style="left:12px;top:297px;width:410px;height:1px;background:#dcdcd4;"></div>
<span class="t" style="left:13px;top:278.74px;font-size:12.3px;line-height:20px;color:#000;letter-spacing:0.007px;">2002 193321 000 00 TH</span>
<span class="t" style="left:261px;top:278.74px;font-size:12.3px;line-height:20px;color:#000;letter-spacing:0.058px;">1995-04-06</span>
<span class="t" style="left:351.2px;top:278.74px;font-size:12.3px;line-height:20px;color:#000;letter-spacing:0.058px;">1995-03-20</span>
<div style="left:8px;top:298px;width:3px;height:19px;background:#b9e6bb;"></div>
<div style="left:12px;top:317px;width:410px;height:1px;background:#dcdcd4;"></div>
<span class="t" style="left:13px;top:298.74px;font-size:12.3px;line-height:20px;color:#000;letter-spacing:0.007px;">2002 193322 000 00 TH</span>
<span class="t" style="left:261px;top:298.74px;font-size:12.3px;line-height:20px;color:#000;letter-spacing:0.058px;">2001-08-21</span>
<span class="t" style="left:351.2px;top:298.74px;font-size:12.3px;line-height:20px;color:#000;letter-spacing:0.058px;">2001-08-13</span>
<div style="left:8px;top:318px;width:3px;height:19px;background:#ff6fa0;"></div>
<div style="left:12px;top:337px;width:410px;height:1px;background:#dcdcd4;"></div>
<span class="t" style="left:13px;top:318.74px;font-size:12.3px;line-height:20px;color:#000;letter-spacing:0.098px;">2015 118711 000 00 RE</span>
<span class="t" style="left:173px;top:318.74px;font-size:12.3px;line-height:20px;color:#000;letter-spacing:0.134px;">022822120016</span>
<span class="t" style="left:261px;top:318.74px;font-size:12.3px;line-height:20px;color:#000;letter-spacing:0.058px;">2015-05-26</span>
<div style="left:8px;top:338px;width:3px;height:19px;background:#b4f2e2;"></div>
<div style="left:12px;top:357px;width:410px;height:1px;background:#dcdcd4;"></div>
<span class="t" style="left:13px;top:338.74px;font-size:12.3px;line-height:20px;color:#000;letter-spacing:-0.021px;">2006 026456 NSN 00 SS</span>
<span class="t" style="left:173px;top:338.74px;font-size:12.3px;line-height:20px;color:#000;letter-spacing:-0.144px;">A-97382</span>
<span class="t" style="left:261px;top:338.74px;font-size:12.3px;line-height:20px;color:#000;letter-spacing:0.058px;">2006-02-17</span>
<span class="t" style="left:351.2px;top:338.74px;font-size:12.3px;line-height:20px;color:#000;letter-spacing:0.058px;">1982-05-17</span>
<div style="left:171px;top:178px;width:1px;height:180px;background:#dcdcd4;"></div>
<div style="left:259px;top:178px;width:1px;height:180px;background:#dcdcd4;"></div>
<div style="left:349px;top:178px;width:1px;height:180px;background:#dcdcd4;"></div>
<div style="left:12px;top:178px;width:1px;height:180px;background:#e4e4de;"></div>
<div style="left:421px;top:155px;width:1px;height:786px;background:#c8c8c8;"></div>
<div style="left:5px;top:941px;width:417px;height:16px;background:#f0f0f0;"></div>
<div style="left:40px;top:942px;width:65px;height:15px;background:#cdcdcd;"></div>
<svg class="i" style="left:22.7px;top:944px;" width="10" height="11" viewBox="0 0 10 11"><path d="M9.4 0 L5.8 0 L0 5.5 L5.8 11 L9.4 11 L3.7 5.5z" fill="#5c5c5c"/></svg>
<svg class="i" style="left:394.4px;top:944px;" width="10" height="11" viewBox="0 0 10 11"><path d="M0 0 L3.6 0 L9.4 5.5 L3.6 11 L0 11 L5.7 5.5z" fill="#5c5c5c"/></svg>
<div style="left:422px;top:74px;width:4px;height:883px;background:#3f5fa8;"></div>
<div style="left:426px;top:74px;width:1px;height:883px;background:#bdbdbd;"></div>
<div class="g" style="left:427px;top:74px;width:1248px;height:26px;"></div>
<div style="left:427px;top:74px;width:1248px;height:1px;background:#c9c4bc;"></div>
<div style="left:1674px;top:74px;width:1px;height:883px;background:#a6a6a6;"></div>
<div class="tab" style="left:429px;top:79px;width:57px;height:21px;"></div>
<span class="t" style="left:438.8px;top:79.92px;font-size:10.9px;line-height:20px;color:#686868;letter-spacing:0.282px;font-weight:bold;-webkit-text-stroke:0.3px #686868;">Folder</span>
<div class="tab" style="left:488px;top:79px;width:72px;height:21px;"></div>
<span class="t" style="left:498px;top:79.92px;font-size:10.9px;line-height:20px;color:#686868;letter-spacing:0.584px;font-weight:bold;-webkit-text-stroke:0.3px #686868;">Property</span>
<div class="tabP" style="left:562px;top:78px;width:60px;height:22px;"></div>
<span class="t" style="left:572.3px;top:78.99px;font-size:11px;line-height:20px;color:#17326f;letter-spacing:0.222px;font-weight:bold;-webkit-text-stroke:0.3px #17326f;">People</span>
<div class="tab" style="left:624px;top:79px;width:45px;height:21px;"></div>
<span class="t" style="left:633.8px;top:79.92px;font-size:10.9px;line-height:20px;color:#686868;letter-spacing:0.756px;font-weight:bold;-webkit-text-stroke:0.3px #686868;">Info</span>
<div class="tab" style="left:671px;top:79px;width:42px;height:21px;"></div>
<span class="t" style="left:680.8px;top:79.92px;font-size:10.9px;line-height:20px;color:#686868;letter-spacing:0.406px;font-weight:bold;-webkit-text-stroke:0.3px #686868;">Fee</span>
<div class="tab" style="left:715px;top:79px;width:66px;height:21px;"></div>
<span class="t" style="left:725px;top:79.92px;font-size:10.9px;line-height:20px;color:#686868;letter-spacing:0.197px;font-weight:bold;-webkit-text-stroke:0.3px #686868;">Process</span>
<div class="tab" style="left:783px;top:79px;width:80px;height:21px;"></div>
<span class="t" style="left:793px;top:79.92px;font-size:10.9px;line-height:20px;color:#686868;letter-spacing:0.563px;font-weight:bold;-webkit-text-stroke:0.3px #686868;">Document</span>
<div class="tab" style="left:865px;top:79px;width:77px;height:21px;"></div>
<span class="t" style="left:875px;top:79.92px;font-size:10.9px;line-height:20px;color:#686868;letter-spacing:0.677px;font-weight:bold;-webkit-text-stroke:0.3px #686868;">Comment</span>
<div class="tab" style="left:944px;top:79px;width:90px;height:21px;"></div>
<span class="t" style="left:954.3px;top:79.92px;font-size:10.9px;line-height:20px;color:#686868;letter-spacing:0.754px;font-weight:bold;-webkit-text-stroke:0.3px #686868;">Attachment</span>
<div style="left:1655px;top:78px;width:16px;height:16px;background:#c9c9c9;border-right:1px solid #7f95c0;"></div>
<svg class="i" style="left:1659px;top:84px;" width="8" height="5" viewBox="0 0 8 5"><path d="M0 0h8L4 4.5z" fill="#555"/></svg>
<span class="t" style="left:430.4px;top:103.74px;font-size:12.3px;line-height:20px;color:#000;letter-spacing:-0.039px;">Primary People Type : Responsible Party</span>
<svg class="i" style="left:1655px;top:106.3px;" width="16" height="15.5" viewBox="0 0 16 15.5"><rect x="0" y="0" width="16" height="15.5" rx="1.3" fill="url(#bi)"/><rect x="0" y="0" width="16" height="15.5" rx="1.3" fill="url(#bi2)"/><path d="M5.4 2.4 L1.9 7.8 L5.6 13.4 M10.4 2.4 L14.2 7.8 L10.6 13.4" fill="none" stroke="#fff" stroke-width="1.6" stroke-linecap="round" stroke-linejoin="round"/></svg>
<div style="left:427px;top:127px;width:1247px;height:1px;background:#a2a2a2;"></div>
<svg class="i" style="left:436px;top:135px;" width="8" height="8" viewBox="0 0 8 8"><path d="M4 0v8M0 4h8" stroke="#000" stroke-width="2"/></svg>
<span class="t" style="left:452px;top:130.64px;font-size:9.7px;line-height:20px;color:#000;letter-spacing:0.380px;-webkit-text-stroke:0.22px #000;">Add</span>
<svg class="i" style="left:478px;top:133px;" width="14" height="14" viewBox="0 0 14 14"><path d="M0.7 1.2 L12.2 12.4" stroke="#000" stroke-width="1.4"/><path d="M13 0.6 L1.2 11.2" stroke="#000" stroke-width="2.4" fill="none"/><circle cx="12.9" cy="13" r="0.7"/></svg>
<span class="t" style="left:496.3px;top:130.64px;font-size:9.7px;line-height:20px;color:#000;letter-spacing:0.410px;-webkit-text-stroke:0.22px #000;">Delete</span>
<svg class="i" style="left:533px;top:131px;" width="14" height="18" viewBox="0 0 14 18"><defs><linearGradient id="rf" x1="0" y1="0" x2="1" y2="0"><stop offset="0" stop-color="#7ea8fa"/><stop offset="0.5" stop-color="#5a86d8"/><stop offset="1" stop-color="#5f8ce0"/></linearGradient><linearGradient id="rf2" x1="1" y1="0" x2="0" y2="0"><stop offset="0" stop-color="#7ea8fa"/><stop offset="0.5" stop-color="#5a86d8"/><stop offset="1" stop-color="#5f8ce0"/></linearGradient></defs><path d="M-0.1 8.9 C0.3 4 4 0.6 9.2 1.2 L12.1 0.9 L12.1 7.9 L6 7.9 L8.2 5.8 C5.4 4.4 2.4 6 -0.1 8.9z" fill="url(#rf)"/><path d="M13.1 9.3 C12.7 14.2 9 17.6 3.8 17 L0.9 17.3 L0.9 10.3 L7 10.3 L4.8 12.4 C7.6 13.8 10.6 12.2 13.1 9.3z" fill="url(#rf2)"/></svg>
<span class="t" style="left:549.3px;top:130.64px;font-size:9.7px;line-height:20px;color:#000;letter-spacing:0.076px;-webkit-text-stroke:0.22px #000;">Refresh</span>
<svg class="i" style="left:593px;top:132px;" width="17" height="16" viewBox="0 0 17 16"><defs><linearGradient id="vl" x1="0" y1="0" x2="1" y2="0"><stop offset="0" stop-color="#b4bccd"/><stop offset="1" stop-color="#f6f8fc"/></linearGradient></defs><rect x="0.5" y="0.5" width="16" height="15" fill="#e6eeff" stroke="#8796ba"/><rect x="1" y="1" width="3.8" height="14" fill="url(#vl)"/><rect x="5.4" y="1" width="1.8" height="14" fill="#f5f8ff"/><path d="M5 1v14" stroke="#8494bc" stroke-width="0.9"/><path d="M7.4 3.5h8.4M7.4 7.5h8.4M7.4 11.5h8.4" stroke="#6f9aec" stroke-width="1.1"/><path d="M7.4 5.5h8.4M7.4 9.5h8.4M7.4 13.5h8.4" stroke="#a9c3f6" stroke-width="1.1"/><path d="M5.8 3.5h1M5.8 5.5h1M5.8 7.5h1M5.8 9.5h1M5.8 11.5h1M5.8 13.5h1" stroke="#9fb4e4" stroke-width="1"/><path d="M0.4 15.6 H16.6 V0.6" stroke="#44609c" stroke-width="1.2" fill="none"/></svg>
<span class="t" style="left:613.3px;top:130.64px;font-size:9.7px;line-height:20px;color:#000;letter-spacing:0.412px;-webkit-text-stroke:0.22px #000;">View</span>
<div style="left:642px;top:133px;width:1px;height:14px;background:#b2b2b2;"></div>
<svg class="i" style="left:646px;top:138px;" width="10" height="5" viewBox="0 0 10 5"><path d="M0 0h9.5L4.75 5z" fill="#5a5a5a"/></svg>
<svg class="i" style="left:667px;top:132px;" width="8" height="16" viewBox="0 0 8 16"><rect x="1.4" y="1" width="5.2" height="10.6" fill="#ffd91c" stroke="#000" stroke-width="1.1"/><rect x="1.9" y="3.6" width="1.3" height="7.6" fill="#f2a400"/><rect x="1.9" y="1.5" width="4.2" height="1.7" fill="#e8321e"/><rect x="1.9" y="3.1" width="4.2" height="0.8" fill="#caa468"/><path d="M1.4 11.6 L4 15.6 L6.6 11.6z" fill="#f1e3b8" stroke="#000" stroke-width="1"/><path d="M4 15.8l-1-1.9h2z" fill="#000"/></svg>
<span class="t" style="left:682.5px;top:130.64px;font-size:9.7px;line-height:20px;color:#000;letter-spacing:0.521px;-webkit-text-stroke:0.22px #000;">Edit</span>
<span class="t" style="left:1648px;top:131.84px;font-size:12px;line-height:20px;color:#000;">?</span>
<div style="left:427px;top:154px;width:1248px;height:779px;background:#f5f5ec;border-left:3px solid #a2a2a2;border-right:4px solid #a2a2a2;border-top:2px solid #9c9c9c;"></div>
<div style="left:433px;top:159px;width:747px;height:40px;background:#fff;"></div>
<div style="left:434px;top:160px;width:746px;height:19px;background:#a0a0a0;"></div>
<div style="left:434px;top:180px;width:746px;height:19px;background:#a0a0a0;"></div>
<div style="left:433px;top:159px;width:747px;height:1px;background:#fff;"></div>
<div class="hc" style="left:434px;top:160px;width:297px;height:18px;"></div>
<div style="left:732px;top:160px;width:1px;height:18px;background:#fff;"></div>
<div class="hc" style="left:733px;top:160px;width:297px;height:18px;"></div>
<div style="left:1031px;top:160px;width:1px;height:18px;background:#fff;"></div>
<div class="hc" style="left:1032px;top:160px;width:147px;height:18px;"></div>
<div style="left:433px;top:179px;width:747px;height:1px;background:#fff;"></div>
<div class="hc" style="left:434px;top:180px;width:197px;height:18px;"></div>
<div style="left:632px;top:180px;width:1px;height:18px;background:#fff;"></div>
<div class="hc" style="left:633px;top:180px;width:98px;height:18px;"></div>
<div style="left:732px;top:180px;width:1px;height:18px;background:#fff;"></div>
<div class="hc" style="left:733px;top:180px;width:396px;height:18px;"></div>
<div style="left:1130px;top:180px;width:1px;height:18px;background:#fff;"></div>
<div class="hc" style="left:1131px;top:180px;width:48px;height:18px;"></div>
<div style="left:631px;top:179px;width:1px;height:1px;background:#a0a0a0;"></div>
<div style="left:731px;top:179px;width:1px;height:1px;background:#a0a0a0;"></div>
<div style="left:1129px;top:179px;width:1px;height:1px;background:#a0a0a0;"></div>
<div style="left:1179px;top:179px;width:1px;height:1px;background:#a0a0a0;"></div>
<div style="left:731px;top:159px;width:1px;height:1px;background:#a0a0a0;"></div>
<div style="left:1030px;top:159px;width:1px;height:1px;background:#a0a0a0;"></div>
<div style="left:1179px;top:159px;width:1px;height:1px;background:#a0a0a0;"></div>
<span class="t" style="left:437.5px;top:160.74px;font-size:12.3px;line-height:20px;color:#000;">Name</span>
<span class="t" style="left:736.3px;top:160.74px;font-size:12.3px;line-height:20px;color:#000;">Address</span>
<span class="t" style="left:1035.5px;top:160.74px;font-size:12.3px;line-height:20px;color:#000;">Telephone</span>
<span class="t" style="left:437.5px;top:180.74px;font-size:12.3px;line-height:20px;color:#000;letter-spacing:0.063px;">Person&#x27;s Role</span>
<span class="t" style="left:636.3px;top:180.74px;font-size:12.3px;line-height:20px;color:#000;">People ID</span>
<span class="t" style="left:736.3px;top:180.74px;font-size:12.3px;line-height:20px;color:#000;">Comment</span>
<svg class="i" style="left:1133.2px;top:183px;" width="16" height="15" viewBox="0 0 16 15"><path d="M1 8.4 C1 6.6 2.4 5.8 3.6 5.8 L12.6 5.8 C14 5.8 15.2 6.8 15.2 8.2 L15.2 11.4 L1 11.4z" fill="#9db4e6" stroke="#5f78b8" stroke-width="0.7"/><path d="M4.6 0.5 L13.8 0.5 L12.2 7 L3 7z" fill="#fdfdff" stroke="#8292bc" stroke-width="0.7"/><path d="M5.6 2.4 h6.6 M5.2 4.2 h6.6" stroke="#98a6c8" stroke-width="0.8"/><path d="M2.4 7.6 h11.4" stroke="#c6d4f2" stroke-width="0.9"/><rect x="1.4" y="10.6" width="13.4" height="3.8" rx="0.6" fill="#eef2fa" stroke="#7f8fb8" stroke-width="0.7"/><rect x="10.8" y="11.4" width="2.4" height="2.2" fill="#20cc20"/></svg>
<div style="left:432px;top:222px;width:746px;height:18px;background:#ebecdd;"></div>
<div style="left:431px;top:240px;width:747px;height:1px;background:#a4a4a4;"></div>
<div style="left:431px;top:241px;width:747px;height:1px;background:#fbfbf6;"></div>
<div style="left:730px;top:204px;width:1px;height:18px;background:#e2e2d8;"></div>
<div style="left:1029px;top:204px;width:1px;height:18px;background:#e2e2d8;"></div>
<div style="left:631px;top:222px;width:2px;height:18px;background:#e3e4d6;"></div>
<div style="left:730px;top:222px;width:2px;height:18px;background:#e3e4d6;"></div>
<div style="left:1129px;top:222px;width:2px;height:18px;background:#e3e4d6;"></div>
<div style="left:431px;top:204px;width:1px;height:37px;background:#dcdcd2;"></div>
<span class="t" style="left:434.6px;top:202.84px;font-size:12px;line-height:20px;color:#000;letter-spacing:0.033px;font-weight:bold;">Nardos Asfaw</span>
<span class="t" style="left:733px;top:202.74px;font-size:12.3px;line-height:20px;color:#000;">1627 Clarke Springs Dr Allen Texas</span>
<span class="t" style="left:435.4px;top:221.74px;font-size:12.3px;line-height:20px;color:#000;">Owner</span>
<span class="t" style="right:951.5px;top:221.74px;font-size:12.3px;line-height:20px;color:#000;">1510785</span>
<span class="t" style="left:733px;top:221.74px;font-size:12.3px;line-height:20px;color:#000;letter-spacing:-0.131px;">Inserted by STP_STAMP.Sync on 12/17/2016</span>
<span class="t" style="left:1131px;top:221.74px;font-size:12.3px;line-height:20px;color:#000;">Yes</span>
<div style="left:432px;top:264px;width:746px;height:18px;background:#ebecdd;"></div>
<div style="left:431px;top:282px;width:747px;height:1px;background:#a4a4a4;"></div>
<div style="left:431px;top:283px;width:747px;height:1px;background:#fbfbf6;"></div>
<div style="left:730px;top:246px;width:1px;height:18px;background:#e2e2d8;"></div>
<div style="left:1029px;top:246px;width:1px;height:18px;background:#e2e2d8;"></div>
<div style="left:631px;top:264px;width:2px;height:18px;background:#e3e4d6;"></div>
<div style="left:730px;top:264px;width:2px;height:18px;background:#e3e4d6;"></div>
<div style="left:1129px;top:264px;width:2px;height:18px;background:#e3e4d6;"></div>
<div style="left:431px;top:246px;width:1px;height:37px;background:#dcdcd2;"></div>
<span class="t" style="left:434.6px;top:244.84px;font-size:12px;line-height:20px;color:#000;letter-spacing:-0.560px;font-weight:bold;">NARDOS TEKLEAB</span>
<span class="t" style="left:733px;top:244.74px;font-size:12.3px;line-height:20px;color:#000;">1627 clarke springs DRIVE allen Texas</span>
<span class="t" style="left:1031.6px;top:244.74px;font-size:12.3px;line-height:20px;color:#000;">(651) 558-7100</span>
<span class="t" style="left:435.4px;top:263.74px;font-size:12.3px;line-height:20px;color:#000;">Responsible Party</span>
<span class="t" style="right:951.5px;top:263.74px;font-size:12.3px;line-height:20px;color:#000;">1419346</span>
<span class="t" style="left:1131px;top:263.74px;font-size:12.3px;line-height:20px;color:#000;">Yes</span>
<div style="left:432px;top:306px;width:746px;height:18px;background:#ebecdd;"></div>
<div style="left:431px;top:324px;width:747px;height:1px;background:#a4a4a4;"></div>
<div style="left:431px;top:325px;width:747px;height:1px;background:#fbfbf6;"></div>
<div style="left:730px;top:288px;width:1px;height:18px;background:#e2e2d8;"></div>
<div style="left:1029px;top:288px;width:1px;height:18px;background:#e2e2d8;"></div>
<div style="left:631px;top:306px;width:2px;height:18px;background:#e3e4d6;"></div>
<div style="left:730px;top:306px;width:2px;height:18px;background:#e3e4d6;"></div>
<div style="left:1129px;top:306px;width:2px;height:18px;background:#e3e4d6;"></div>
<div style="left:431px;top:288px;width:1px;height:37px;background:#dcdcd2;"></div>
<span class="t" style="left:434.6px;top:286.84px;font-size:12px;line-height:20px;color:#000;letter-spacing:0.032px;font-weight:bold;">Nardos Tekleab</span>
<span class="t" style="left:733px;top:286.74px;font-size:12.3px;line-height:20px;color:#000;letter-spacing:-0.134px;">198 Bridlewood Dr St Paul MINNESOTA</span>
<span class="t" style="left:435.4px;top:305.74px;font-size:12.3px;line-height:20px;color:#000;">Previous Owner</span>
<span class="t" style="right:951.5px;top:305.74px;font-size:12.3px;line-height:20px;color:#000;">821601</span>
<span class="t" style="left:1131px;top:305.74px;font-size:12.3px;line-height:20px;color:#000;">No</span>
<div style="left:432px;top:348px;width:746px;height:18px;background:#ebecdd;"></div>
<div style="left:431px;top:366px;width:747px;height:1px;background:#a4a4a4;"></div>
<div style="left:431px;top:367px;width:747px;height:1px;background:#fbfbf6;"></div>
<div style="left:730px;top:330px;width:1px;height:18px;background:#e2e2d8;"></div>
<div style="left:1029px;top:330px;width:1px;height:18px;background:#e2e2d8;"></div>
<div style="left:631px;top:348px;width:2px;height:18px;background:#e3e4d6;"></div>
<div style="left:730px;top:348px;width:2px;height:18px;background:#e3e4d6;"></div>
<div style="left:1129px;top:348px;width:2px;height:18px;background:#e3e4d6;"></div>
<div style="left:431px;top:330px;width:1px;height:37px;background:#dcdcd2;"></div>
<span class="t" style="left:434.6px;top:328.84px;font-size:12px;line-height:20px;color:#000;letter-spacing:0.032px;font-weight:bold;">Nardos Tekleab</span>
<span class="t" style="left:733px;top:328.74px;font-size:12.3px;line-height:20px;color:#000;letter-spacing:-0.124px;">13853 Echo Park Ln Burnsville MINNESOTA</span>
<span class="t" style="left:435.4px;top:347.74px;font-size:12.3px;line-height:20px;color:#000;">Previous Owner</span>
<span class="t" style="right:951.5px;top:347.74px;font-size:12.3px;line-height:20px;color:#000;">1455336</span>
<span class="t" style="left:733px;top:347.74px;font-size:12.3px;line-height:20px;color:#000;letter-spacing:-0.131px;">Inserted by STP_STAMP.Sync on 05/02/2015</span>
<span class="t" style="left:1131px;top:347.74px;font-size:12.3px;line-height:20px;color:#000;">No</span>
<div style="left:431px;top:370px;width:749px;height:40px;background:#fff;"></div>
<div style="left:431px;top:370px;width:749px;height:38px;background:#7399d6;border-left:1px solid #6b93dd;border-top:1px solid #6f96da;"></div>
<div style="left:432px;top:407px;width:747px;height:1px;background:#9b9fa8;"></div>
<div style="left:431px;top:409px;width:749px;height:1px;background:#6f96dc;"></div>
<div style="left:432px;top:372px;width:1px;height:35px;background:#d3dcec;"></div>
<div style="left:1179px;top:370px;width:1px;height:40px;background:#6f96dc;"></div>
<div style="left:730px;top:372px;width:1px;height:17px;background:#e4eaf4;"></div>
<div style="left:1029px;top:372px;width:1px;height:17px;background:#e4eaf4;"></div>
<div style="left:631px;top:390px;width:1px;height:17px;background:#e4eaf4;"></div>
<div style="left:730px;top:390px;width:1px;height:17px;background:#e4eaf4;"></div>
<div style="left:1129px;top:390px;width:1px;height:17px;background:#e4eaf4;"></div>
<span class="t" style="left:434.6px;top:369.84px;font-size:12px;line-height:20px;color:#fff;letter-spacing:0.033px;font-weight:bold;">Nardos Asfaw</span>
<span class="t" style="left:734px;top:369.74px;font-size:12.3px;line-height:20px;color:#fff;letter-spacing:-0.114px;">13853 Echo Park Ln Burnsville MINNESOTA</span>
<span class="t" style="left:434.4px;top:388.74px;font-size:12.3px;line-height:20px;color:#fff;">Previous Owner</span>
<span class="t" style="right:950.5px;top:388.74px;font-size:12.3px;line-height:20px;color:#fff;">1507363</span>
<span class="t" style="left:732px;top:388.74px;font-size:12.3px;line-height:20px;color:#fff;letter-spacing:-0.071px;">Inserted by STP_STAMP.Sync on 11/07/2016</span>
<span class="t" style="left:1131px;top:388.74px;font-size:12.3px;line-height:20px;color:#fff;">No</span>
<div class="g" style="left:430px;top:933px;width:1242px;height:24px;"></div>
<div style="left:427px;top:933px;width:3px;height:24px;background:#a2a2a2;"></div>
<div style="left:1672px;top:933px;width:3px;height:24px;background:#a2a2a2;"></div>
<div style="left:484px;top:933px;width:1px;height:24px;background:linear-gradient(#7fa3e2,#6a90d8);"></div>
<div style="left:485px;top:933px;width:1px;height:24px;background:rgba(220,234,252,0.15);"></div>
<div style="left:525px;top:933px;width:1px;height:24px;background:linear-gradient(#7fa3e2,#6a90d8);"></div>
<div style="left:526px;top:933px;width:1px;height:24px;background:rgba(220,234,252,0.15);"></div>
<div style="left:662px;top:933px;width:1px;height:24px;background:linear-gradient(#7fa3e2,#6a90d8);"></div>
<div style="left:663px;top:933px;width:1px;height:24px;background:rgba(220,234,252,0.15);"></div>
<div style="left:758px;top:933px;width:1px;height:24px;background:linear-gradient(#7fa3e2,#6a90d8);"></div>
<div style="left:759px;top:933px;width:1px;height:24px;background:rgba(220,234,252,0.15);"></div>
<div style="left:850px;top:933px;width:1px;height:24px;background:linear-gradient(#7fa3e2,#6a90d8);"></div>
<div style="left:851px;top:933px;width:1px;height:24px;background:rgba(220,234,252,0.15);"></div>
<div style="left:907px;top:933px;width:1px;height:24px;background:linear-gradient(#7fa3e2,#6a90d8);"></div>
<div style="left:908px;top:933px;width:1px;height:24px;background:rgba(220,234,252,0.15);"></div>
<span class="t" style="left:439px;top:934.74px;font-size:12.3px;line-height:20px;color:#000;letter-spacing:0.066px;">People</span>
<span class="t" style="left:491px;top:934.74px;font-size:12.3px;line-height:20px;color:#000;letter-spacing:-0.179px;">Copy</span>
<span class="t" style="left:531.7px;top:934.74px;font-size:12.3px;line-height:20px;color:#000;letter-spacing:-0.091px;">Add-Pick the Members</span>
<span class="t" style="left:668.3px;top:934.74px;font-size:12.3px;line-height:20px;color:#000;letter-spacing:-0.233px;">Encrypt/Decrypt</span>
<span class="t" style="left:765px;top:934.74px;font-size:12.3px;line-height:20px;color:#000;letter-spacing:-0.093px;">Print Envelope</span>
<span class="t" style="left:857px;top:934.74px;font-size:12.3px;line-height:20px;color:#000;letter-spacing:0.086px;">Licence</span>
<div style="left:0px;top:960px;width:1680px;height:26px;background:#f0f0f0;"></div>
<div style="left:0px;top:960px;width:1680px;height:1px;background:#b2b2b2;"></div>
<div style="left:0px;top:961px;width:1680px;height:1px;background:#c9c9c9;"></div>
<div style="left:0px;top:962px;width:1680px;height:1px;background:#e3e3e3;"></div>
<div style="left:2px;top:957px;width:1676px;height:3px;background:#1d4e8a;"></div>
<div style="left:4px;top:957px;width:1672px;height:1px;background:#2253a8;"></div>
<div style="left:0px;top:985px;width:1680px;height:1px;background:#6e4654;"></div>
<div style="left:0px;top:984px;width:1680px;height:1px;background:#eadfe2;"></div>
<svg class="i" style="left:1590.6px;top:966.8px;" width="14" height="14" viewBox="0 0 14 14"><circle cx="5.5" cy="5.5" r="4.6" fill="#eaf3ff" stroke="#8a98a8" stroke-width="1.1"/><path d="M5.5 2.6v5.8M2.6 5.5h5.8" stroke="#1668d8" stroke-width="1.9"/><path d="M8.8 8.8l2.6 2.7" stroke="#a0602c" stroke-width="2" stroke-linecap="round"/></svg>
<span class="t" style="left:1606.7px;top:963.70px;font-size:12.4px;line-height:20px;color:#000;transform:scaleX(0.865);transform-origin:0 0;">100%</span>
<svg class="i" style="left:1650px;top:972px;" width="8" height="5" viewBox="0 0 8 5"><path d="M0 0h8L4 4.4z" fill="#111"/></svg>
<div style="left:1675.3px;top:975.2px;width:2px;height:2px;background:#b8b8b8;"></div>
<div style="left:1672.3px;top:978.3px;width:2px;height:2px;background:#b8b8b8;"></div>
<div style="left:1675.3px;top:978.3px;width:2px;height:2px;background:#b8b8b8;"></div>
<div style="left:1669.3px;top:981.4px;width:2px;height:2px;background:#b8b8b8;"></div>
<div style="left:1672.3px;top:981.4px;width:2px;height:2px;background:#b8b8b8;"></div>
<div style="left:1675.3px;top:981.4px;width:2px;height:2px;background:#b8b8b8;"></div>
</div>
</body></html>
